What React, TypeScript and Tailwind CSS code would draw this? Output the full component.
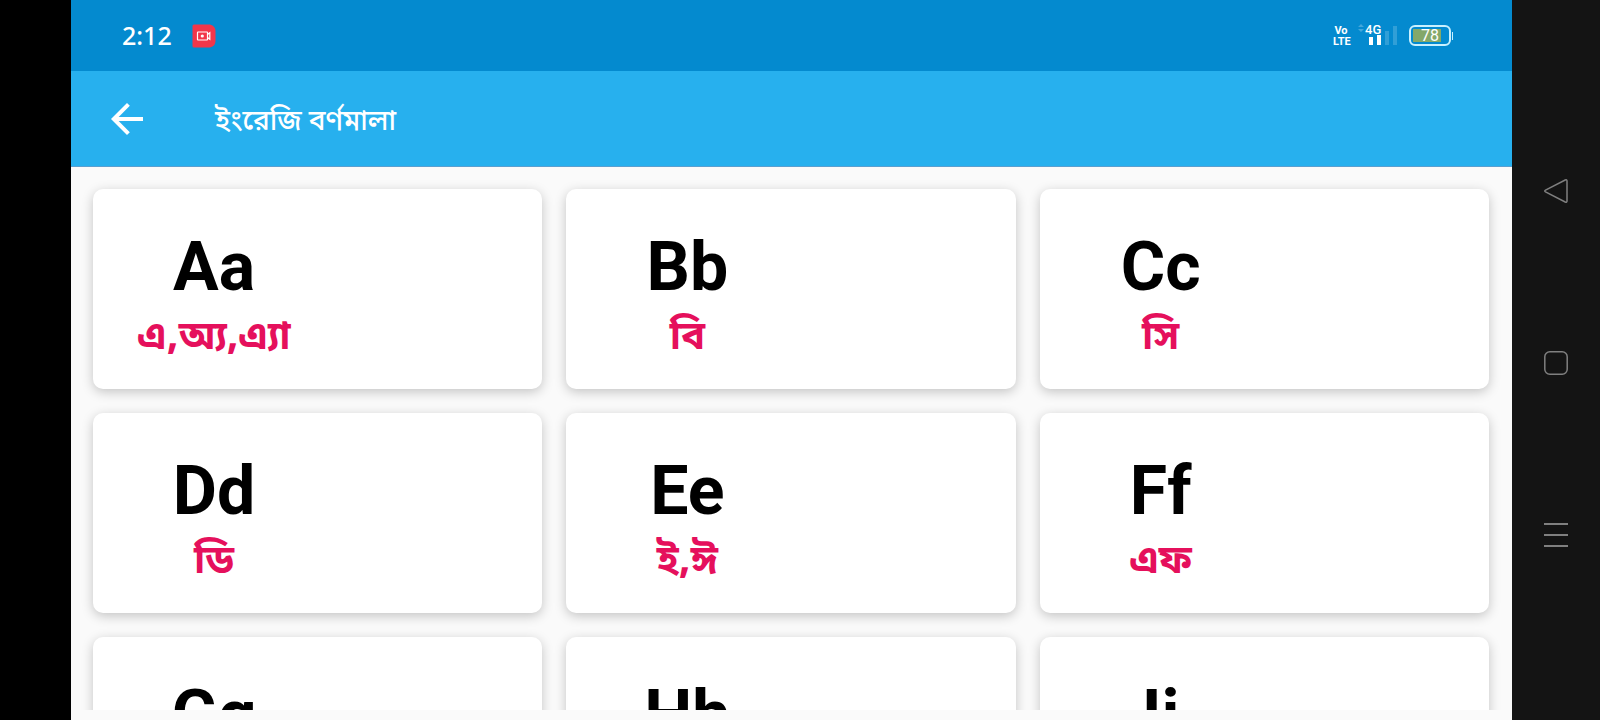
import { MdArrowBack } from 'react-icons/md';

interface Letter {
  glyph: string;
  sound: string;
}

const letters: Letter[] = [
  { glyph: 'Aa', sound: 'এ,অ্য,এ্যা' },
  { glyph: 'Bb', sound: 'বি' },
  { glyph: 'Cc', sound: 'সি' },
  { glyph: 'Dd', sound: 'ডি' },
  { glyph: 'Ee', sound: 'ই,ঈ' },
  { glyph: 'Ff', sound: 'এফ' },
  { glyph: 'Gg', sound: 'জি' },
  { glyph: 'Hh', sound: 'এইচ' },
  { glyph: 'Ii', sound: 'আই' },
];

function RecordIcon() {
  return (
    <svg className="w-6 h-6" viewBox="0 0 24 24" fill="none">
      <path d="M2 0.5H18Q23.5 2 23.5 7V17Q23.5 22 18 23.5H2Q0.5 23.5 0.5 22V2Q0.5 0.5 2 0.5z" fill="#f2364a" />
      <rect x="5.5" y="8" width="10" height="8" rx="0.5" stroke="white" strokeWidth="1.2" />
      <circle cx="10.3" cy="12" r="1.6" fill="white" />
      <path d="M15.5 10.5l2.3-1.8v6.6l-2.3-1.8" stroke="white" strokeWidth="1.2" />
    </svg>
  );
}

function SignalIcon() {
  return (
    <svg className="w-7 h-3 overflow-visible" viewBox="0 0 28 12">
      <rect x="0" y="2" width="4" height="8" fill="white" />
      <rect x="8" y="0" width="4" height="10" fill="white" />
      <rect x="16" y="-4" width="4" height="14" fill="white" opacity="0.18" />
      <rect x="24" y="-9" width="4" height="19" fill="white" opacity="0.18" />
      <path d="M-11 -8l3 -3l3 3zM-11 -6h6l-3 3z" fill="white" opacity="0.25" />
    </svg>
  );
}

function StatusBar() {
  return (
    <div className="flex items-center justify-between h-[71px] shrink-0 bg-[#048acf] pl-[51px] pr-[59px] text-white">
      <div className="flex items-center gap-5">
        <span className="text-[25px] font-medium font-['Noto_Sans',sans-serif]">2:12</span>
        <RecordIcon />
      </div>
      <div className="flex items-center">
        <div className="w-4 text-center text-[11px] leading-[11px] font-bold">
          <div>Vo</div>
          <div>LTE</div>
        </div>
        <div className="ml-4 flex flex-col text-[13px] leading-[11px] font-medium">
          <span>4G</span>
          <div className="flex pl-1">
            <SignalIcon />
          </div>
        </div>
        <div className="ml-3 flex items-center gap-px">
          <div className="w-[42px] h-[21px] p-[2px] rounded-md border-2 border-[#c9f0ff]">
            <div className="w-7 h-[13px] pr-0.5 bg-[#84a86a] text-right text-base leading-[13px]">78</div>
          </div>
          <div className="w-px h-2 bg-[#c9f0ff]" />
        </div>
      </div>
    </div>
  );
}

function Toolbar() {
  return (
    <header className="flex items-center h-24 shrink-0 bg-[#27b0ee] border-b border-[#5a9fd0] pl-8 text-white">
      <button aria-label="Back">
        <MdArrowBack className="w-12 h-12" />
      </button>
      <h1 className="ml-16 pt-1 text-[28px] font-medium">ইংরেজি বর্ণমালা</h1>
    </header>
  );
}

function LetterCard({ letter }: { letter: Letter }) {
  return (
    <div className="flex h-[200px] bg-white rounded-[10px] shadow-[0_3px_12px_rgba(0,0,0,0.22)]">
      <div className="flex flex-col items-center w-[242px] pt-[38px]">
        <span className="text-[68px] leading-[80px] font-bold text-black">{letter.glyph}</span>
        <span className="text-[40px] leading-[64px] font-bold text-[#e5105c] font-['Noto_Sans_Bengali','Noto_Sans',sans-serif]">
          {letter.sound}
        </span>
      </div>
    </div>
  );
}

function NavigationBar() {
  return (
    <nav className="flex flex-col items-center justify-center gap-[148px] w-[88px] pt-1.5 shrink-0 bg-[#141414] text-[#808080]">
      <button aria-label="Back">
        <svg className="w-6 h-6" viewBox="0 0 24 24" fill="none" stroke="currentColor" strokeWidth="1.5">
          <path d="M1.5 11.1L21.2 1Q23 .4 23 2V22Q23 23.6 21.2 23L1.5 12.9Q0 12 1.5 11.1z" />
        </svg>
      </button>
      <button aria-label="Home">
        <svg className="w-6 h-6" viewBox="0 0 24 24" fill="none" stroke="currentColor" strokeWidth="1.5">
          <rect x="0.8" y="0.8" width="22.4" height="22.4" rx="5" />
        </svg>
      </button>
      <button aria-label="Recent apps">
        <svg className="w-6 h-6" viewBox="0 0 24 24" fill="none" stroke="currentColor" strokeWidth="2">
          <path d="M0 1h24M0 12h24M0 23h24" />
        </svg>
      </button>
    </nav>
  );
}

function App() {
  return (
    <div className="flex h-screen bg-black font-['Roboto','Noto_Sans_Bengali','Noto_Sans',sans-serif]">
      <div className="flex flex-col flex-1 min-w-0 ml-[71px] bg-[#fafafa]">
        <StatusBar />
        <Toolbar />
        <main className="flex-1 min-h-0 mb-2.5 overflow-hidden">
          <div className="grid grid-cols-3 gap-6 pl-[22px] pr-[23px] pt-[22px]">
            {letters.map((letter) => (
              <LetterCard key={letter.glyph} letter={letter} />
            ))}
          </div>
        </main>
      </div>
      <NavigationBar />
    </div>
  );
}

export default App;
